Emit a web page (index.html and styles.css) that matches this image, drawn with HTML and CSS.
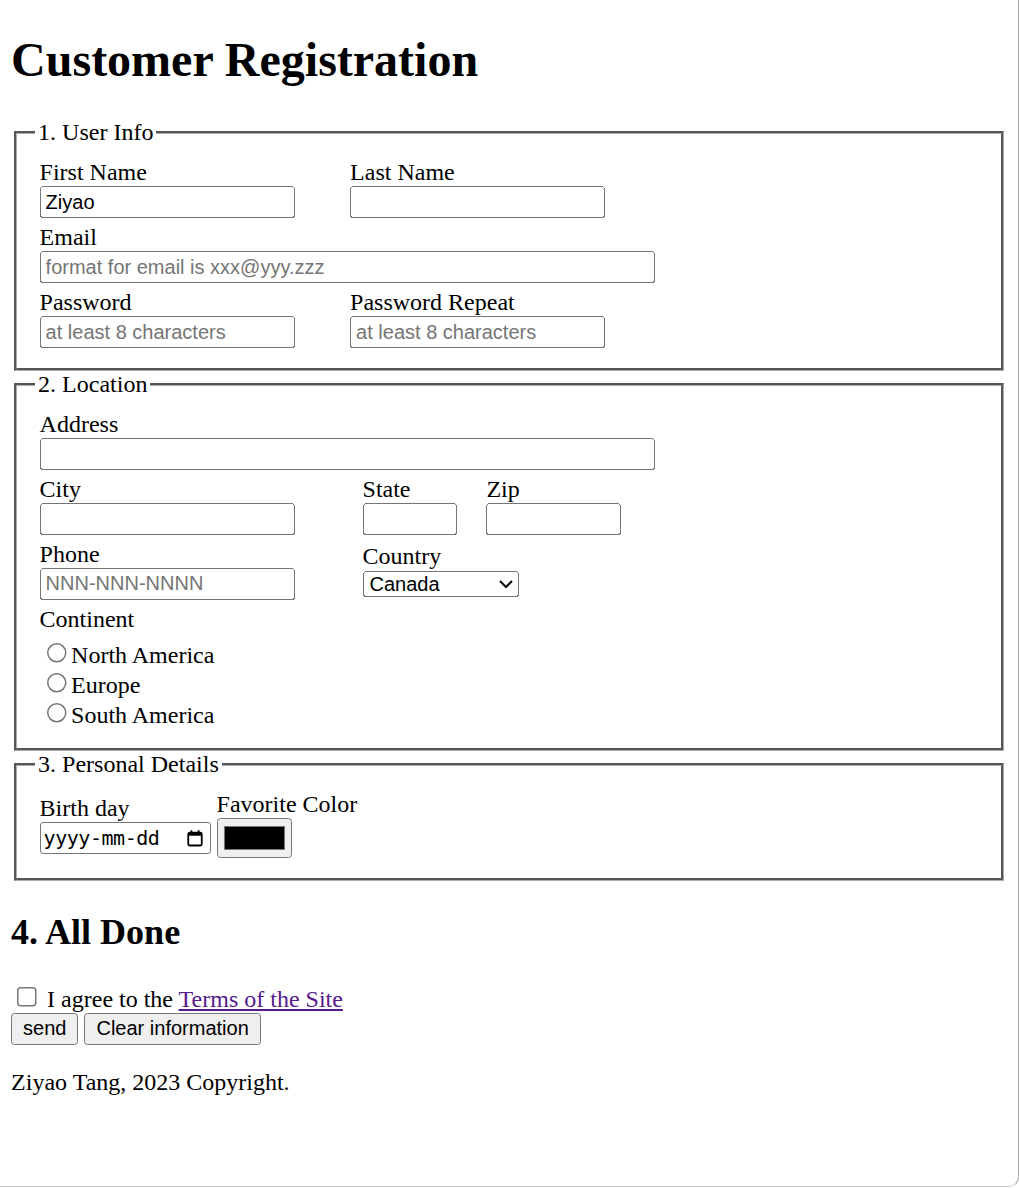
FILE: index.html
```html
<!DOCTYPE html>
<html lang="en">
<head>
<meta charset="utf-8">
<title>Customer Registration</title>
<link rel="stylesheet" href="styles.css">
</head>
<body>
<h1>Customer Registration</h1>
<form>
  <fieldset>
    <legend>1. User Info</legend>
    <table>
      <tr>
        <td><label for="fname">First Name</label><br><input class="txt" type="text" id="fname" value="Ziyao"></td>
        <td><label for="lname">Last Name</label><br><input class="txt" type="text" id="lname"></td>
      </tr>
      <tr>
        <td colspan="2"><label for="email">Email</label><br><input class="txt wide" type="email" id="email" placeholder="format for email is xxx@yyy.zzz"></td>
      </tr>
      <tr>
        <td><label for="pw">Password</label><br><input class="txt" type="password" id="pw" placeholder="at least 8 characters"></td>
        <td><label for="pw2">Password Repeat</label><br><input class="txt" type="password" id="pw2" placeholder="at least 8 characters"></td>
      </tr>
    </table>
  </fieldset>
  <fieldset>
    <legend>2. Location</legend>
    <table>
      <tr>
        <td colspan="3"><label for="addr">Address</label><br><input class="txt wide" type="text" id="addr"></td>
      </tr>
      <tr>
        <td><label for="city">City</label><br><input class="txt" type="text" id="city"></td>
        <td><label for="state">State</label><br><input class="txt state" type="text" id="state"></td>
        <td><label for="zip">Zip</label><br><input class="txt zip" type="text" id="zip"></td>
      </tr>
      <tr>
        <td><label for="phone">Phone</label><br><input class="txt" type="tel" id="phone" placeholder="NNN-NNN-NNNN"></td>
        <td colspan="2"><label for="country">Country</label><br><select id="country" class="sel">
          <option>Canada</option>
          <option>United States</option>
          <option>Mexico</option>
        </select></td>
      </tr>
      <tr>
        <td colspan="3">Continent</td>
      </tr>
      <tr>
        <td colspan="3">
          <input type="radio" name="cont" id="na"><label for="na">North America</label><br>
          <input type="radio" name="cont" id="eu"><label for="eu">Europe</label><br>
          <input type="radio" name="cont" id="sa"><label for="sa">South America</label>
        </td>
      </tr>
    </table>
  </fieldset>
  <fieldset>
    <legend>3. Personal Details</legend>
    <table>
      <tr>
        <td><label for="bday">Birth day</label><br><span class="datebox" id="bday"><span class="datetext">yyyy-mm-dd</span><svg class="cal" width="12" height="12" viewBox="0 0 12 12" aria-hidden="true"><rect x="1.5" y="2.5" width="9" height="8.5" rx="1" fill="none" stroke="#000" stroke-width="1.2"/><rect x="1.5" y="2.5" width="9" height="2" fill="#000"/><rect x="3" y="0.8" width="1.2" height="2.4" fill="#000"/><rect x="7.8" y="0.8" width="1.2" height="2.4" fill="#000"/></svg></span></td>
        <td><label for="color">Favorite Color</label><br><input type="color" id="color" value="#000000"></td>
      </tr>
    </table>
  </fieldset>
  <h2>4. All Done</h2>
  <input type="checkbox" id="agree"> <label for="agree">I agree to the <a class="terms" href="#terms">Terms of the Site</a></label><br>
  <button type="submit">send</button>
  <button type="reset">Clear information</button>
</form>
<footer>
  <p>Ziyao Tang, 2023 Copyright.</p>
</footer>
</body>
</html>
```
FILE: styles.css
```css
html {
  height: 1187px;
  box-sizing: border-box;
  border-right: 1px solid #a9a9a9;
  border-bottom: 1px solid #c8c8c8;
  border-bottom-right-radius: 10px;
  background: #fff;
}
body {
  zoom: 1.5;
  margin: 0 7.4px 8px 7.4px;
  font-family: "Liberation Serif", "Times New Roman", serif;
  color: #000;
}
fieldset {
  border: 2px groove #aaaaaa;
}
input, select, button {
  font-family: "Liberation Sans", Arial, sans-serif;
}
.terms {
  color: #551a8b;
}
.txt {
  width: 170px;
  box-sizing: border-box;
}
.wide {
  width: 410px;
}
.state {
  width: 63px;
}
.zip {
  width: 90px;
}
.sel {
  width: 104px;
}
.datebox {
  display: inline-flex;
  align-items: center;
  justify-content: space-between;
  box-sizing: border-box;
  width: 114px;
  height: 21px;
  padding: 1px 4px 1px 2px;
  border: 1px solid #767676;
  border-radius: 2px;
  vertical-align: middle;
  font-family: "DejaVu Sans Mono", "Liberation Mono", monospace;
  font-size: 13.33px;
  background: #fff;
}
.datetext {
  letter-spacing: -0.3px;
}
.cal {
  display: block;
}
```
